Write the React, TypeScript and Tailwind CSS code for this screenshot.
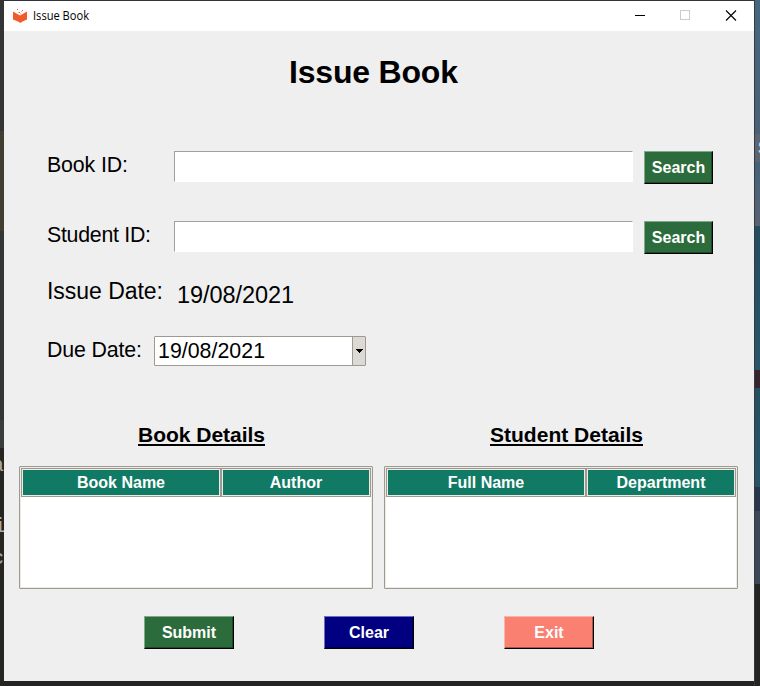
import React from "react";

const arial = "font-['Liberation_Sans',Arial,sans-serif]";

function Label({ text, width, className }: { text: string; width: number; className: string }) {
  return (
    <svg width={width} height="30" className={`block shrink-0 overflow-visible ${className}`}>
      <text x="0" y="22" textLength={width} lengthAdjust="spacing" fill="currentColor">
        {text}
      </text>
    </svg>
  );
}

function RaisedButton({ text, className }: { text: string; className: string }) {
  return (
    <button
      className={`h-[33px] shrink-0 border border-r-black border-b-black text-center text-[16px] leading-[30px] font-bold text-white ${className}`}
    >
      {text}
    </button>
  );
}

const green =
  "bg-[#2c6c3c] border-t-[#80a789] border-l-[#80a789] shadow-[inset_-1px_-1px_0_#1e4928]";
const navy =
  "bg-[#000080] border-t-[#7070b8] border-l-[#7070b8] shadow-[inset_-1px_-1px_0_#000050]";
const salmon =
  "bg-[#fa8072] border-t-[#fcb2aa] border-l-[#fcb2aa] shadow-[inset_-1px_-1px_0_#a8564c]";

function Field() {
  return (
    <div className="h-[31px] w-[459px] border border-t-[#a0a0a0] border-r-white border-b-white border-l-[#a0a0a0] bg-white" />
  );
}

function HeaderCell({ text, className }: { text: string; className: string }) {
  return (
    <div className={`h-[29px] border border-[#9e9a91] bg-[#117a65] ${className}`}>
      <div className="h-[27px] border border-[#eeebe7] text-center text-[16px] leading-[25px] font-bold text-white">
        {text}
      </div>
    </div>
  );
}

function Table({ first, second }: { first: string; second: string }) {
  return (
    <div className="h-[123px] w-[354px] rounded-[1px] border border-[#9e9a91]">
      <div className="h-[121px] border border-[#eeebe7] bg-white">
        <div className="flex">
          <HeaderCell text={first} className="w-[200px]" />
          <HeaderCell text={second} className="w-[150px]" />
        </div>
      </div>
    </div>
  );
}

function Titlebar() {
  return (
    <header className="flex h-[30px] items-center bg-white">
      <svg width="14" height="14" viewBox="0 0 14 14" className="ml-[9px] shrink-0">
        <path d="M0 2.5 L7 6.5 L14 2.5 V10.5 L9.5 12.4 L7.5 14 L5 12.4 L0 10.5 Z" fill="#f15a29" />
        <path d="M4 0h1v1H4zM9 1h1v1H9zM6 3h1v1H6z" fill="#f15a29" />
        <path d="M5 3h1v1H5zM7 4h1v1H7zM8 2h1v1H8z" fill="#f8b49d" />
      </svg>
      <svg width="57" height="30" className="ml-[6px] font-['Open_Sans','Noto_Sans',sans-serif] text-[12px]">
        <text x="0" y="19" textLength="56" lengthAdjust="spacingAndGlyphs">
          Issue Book
        </text>
      </svg>
      <div className="ml-auto flex items-center">
        <svg width="119" height="30" shapeRendering="crispEdges" fill="none">
          <path d="M0 14.5H10" stroke="#000" />
          <rect x="45.5" y="9.5" width="9" height="9" stroke="#ccc" />
          <path d="M91 9.5l10 10M101 9.5l-10 10" stroke="#000" shapeRendering="auto" strokeWidth="1.1" />
        </svg>
      </div>
    </header>
  );
}

export default function App() {
  return (
    <div className={`flex h-[686px] w-[760px] overflow-hidden bg-[#242424] text-black ${arial}`}>
      <aside className="flex h-[686px] w-[4px] shrink-0 flex-col overflow-hidden font-['Liberation_Mono',monospace] text-[20px] leading-[24px] text-[#aaa]">
        <div className="h-[131px] shrink-0 bg-[#333535]" />
        <div className="h-[100px] shrink-0 bg-[#413d31]" />
        <div className="h-[189px] shrink-0 bg-[#333637]" />
        <div className="h-[28px] shrink-0 bg-[#3a3d3e]" />
        <div className="h-[238px] shrink-0 bg-[#272522]">
          <div className="ml-[-8px] pt-[6px]">a</div>
          <div className="ml-[-6px] pt-[37px]">i</div>
          <div className="ml-[-8px] pt-[8px]">c</div>
        </div>
      </aside>

      <div className="flex w-[750px] shrink-0 flex-col border-t border-[#30343b]">
        <Titlebar />
        <main className="h-[650px] bg-[#efefef]">
          <h1 className="pt-[30px] text-[32px] leading-[38px] font-bold">
            <Label text="Issue Book" width={169} className="ml-[285px]" />
          </h1>

          <div className="mt-[60px] flex h-[70px] items-start">
            <Label text="Book ID:" width={81} className="ml-[43px] -mt-[1px] text-[21.33px]" />
            <div className="ml-[46px] flex gap-[11px]">
              <Field />
              <RaisedButton text="Search" className={`w-[69px] ${green}`} />
            </div>
          </div>
          <div className="flex h-[57px] items-start">
            <Label text="Student ID:" width={104} className="ml-[43px] -mt-[1px] text-[21.33px]" />
            <div className="ml-[23px] flex gap-[11px]">
              <Field />
              <RaisedButton text="Search" className={`w-[69px] ${green}`} />
            </div>
          </div>
          <div className="flex h-[58px] items-start">
            <Label text="Issue Date:" width={116} className="ml-[43px] -mt-[1px] text-[23px]" />
            <Label text="19/08/2021" width={117} className="mt-[3px] ml-[14px] text-[23.5px]" />
          </div>
          <div className="flex h-[87px] items-start">
            <Label text="Due Date:" width={95} className="ml-[43px] -mt-[1px] text-[21.33px]" />
            <div className="ml-[12px] flex h-[30px] w-[212px] rounded-[1px] border border-[#9e9a91] bg-white">
              <div className="w-[197px] shrink-0 pl-[3px]">
                <Label text="19/08/2021" width={107} className="-mt-[1px] text-[21.33px]" />
              </div>
              <div className="flex w-[13px] items-center justify-center border-l border-[#9e9a91] bg-[#dcdad5]">
                <svg width="7" height="4" shapeRendering="crispEdges" className="shrink-0">
                  <path d="M0 0h7v1H0zM1 1h5v1H1zM2 2h3v1H2zM3 3h1v1H3z" />
                </svg>
              </div>
            </div>
          </div>

          <div className="flex h-[43px] pl-[134px] text-[21px] leading-[24px] font-bold">
            <h2 className="w-[352px]">
              <Label text="Book Details" width={127} className="h-[25px] -mt-[3px]" />
              <div className="mt-[-1px] h-[2px] w-[127px] bg-black" />
            </h2>
            <h2>
              <Label text="Student Details" width={153} className="h-[25px] -mt-[3px]" />
              <div className="mt-[-1px] h-[2px] w-[153px] bg-black" />
            </h2>
          </div>

          <div className="flex gap-[11px] pl-[15px]">
            <Table first="Book Name" second="Author" />
            <Table first="Full Name" second="Department" />
          </div>
          <div className="mt-[27px] ml-[140px] flex gap-[90px]">
            <RaisedButton text="Submit" className={`w-[90px] ${green}`} />
            <RaisedButton text="Clear" className={`w-[90px] ${navy}`} />
            <RaisedButton text="Exit" className={`w-[90px] ${salmon}`} />
          </div>
        </main>
      </div>

      <aside className="flex h-[686px] w-[6px] shrink-0 flex-col overflow-hidden border-l border-[#343a42]">
        <div className="h-[134px] shrink-0 bg-linear-to-b from-[#466780] to-[#4c6173]" />
        <div className="h-[28px] shrink-0 overflow-hidden bg-[#5c6670] pl-[3px] text-[18px] leading-[28px] font-bold text-[#c5e2f2]">
          S
        </div>
        <div className="h-[64px] shrink-0 bg-linear-to-b from-[#45637a] to-[#596371]" />
        <div className="h-[144px] shrink-0 bg-linear-to-b from-[#244d5e] to-[#28566a]" />
        <div className="h-[18px] shrink-0 bg-[#38242d]" />
        <div className="h-[99px] shrink-0 bg-linear-to-b from-[#24505f] to-[#285468]" />
        <div className="h-[24px] shrink-0 bg-[#29364a]" />
        <div className="h-[73px] shrink-0 bg-[#3b4856]" />
        <div className="h-[102px] shrink-0 bg-[#242422]" />
      </aside>
    </div>
  );
}
